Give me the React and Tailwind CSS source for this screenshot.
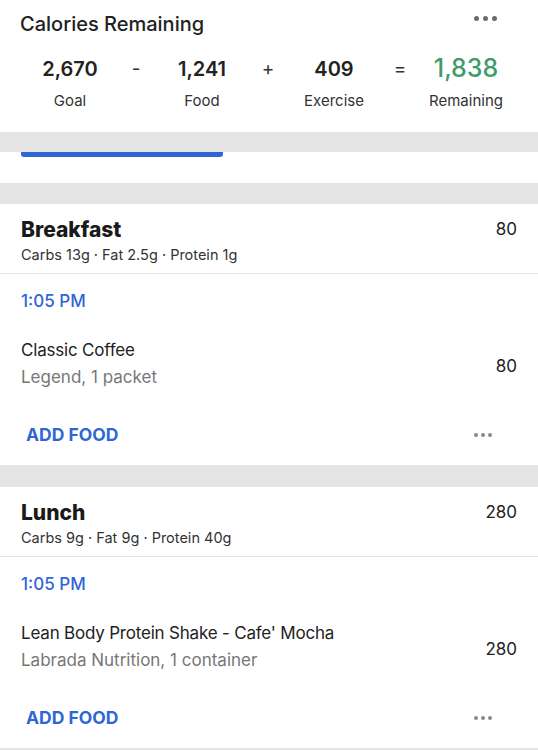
import React from 'react';

const meals = [
  {
    name: 'Breakfast',
    total: 80,
    macros: 'Carbs 13g · Fat 2.5g · Protein 1g',
    time: '1:05 PM',
    food: 'Classic Coffee',
    detail: 'Legend, 1 packet',
    cal: 80,
  },
  {
    name: 'Lunch',
    total: 280,
    macros: 'Carbs 9g · Fat 9g · Protein 40g',
    time: '1:05 PM',
    food: "Lean Body Protein Shake - Cafe' Mocha",
    detail: 'Labrada Nutrition, 1 container',
    cal: 280,
  },
];

function Dots({ size = 'w-[5px] h-[5px]', color = 'bg-[#6b6b6b]', gap = 'gap-[4px]' }) {
  return (
    <div className={`flex ${gap}`}>
      <span className={`${size} ${color} rounded-full`} />
      <span className={`${size} ${color} rounded-full`} />
      <span className={`${size} ${color} rounded-full`} />
    </div>
  );
}

function Stat({ value, label, green }) {
  return (
    <div className="flex flex-col items-center">
      <div
        className={
          green
            ? 'h-[34px] flex items-center text-[25px] font-medium text-[#3f9b6b]'
            : 'h-[34px] flex items-end pb-[2px] text-[20px] font-semibold text-[#222]'
        }
      >
        {value}
      </div>
      <div className="mt-[5px] text-[15px] text-[#333] leading-[20px]">{label}</div>
    </div>
  );
}

function Op({ children }) {
  return (
    <div className="h-[34px] flex items-end pb-[3px] justify-center text-[19px] text-[#333]">
      {children}
    </div>
  );
}

function MealCard({ meal }) {
  return (
    <div className="bg-white">
      <div className="px-[21px] pt-[14px] pb-[8px] flex justify-between">
        <div>
          <div className="h-[24px] flex items-center text-[21px] font-extrabold text-[#1a1a1a]">
            {meal.name}
          </div>
          <div className="mt-[3px] h-[20px] flex items-center text-[14.5px] text-[#333]">
            {meal.macros}
          </div>
        </div>
        <div className="h-[24px] flex items-center text-[17px] text-[#222]">{meal.total}</div>
      </div>
      <div className="h-px bg-[#e6e6e6]" />
      <div className="h-[52px] pt-[4px] px-[21px] flex items-center text-[17px] font-medium text-[#2f66d6]">
        {meal.time}
      </div>
      <div className="px-[21px] pt-[13px] pb-[11px] flex items-center justify-between">
        <div>
          <div className="h-[24px] flex items-center text-[17px] tracking-[-0.2px] text-[#222]">{meal.food}</div>
          <div className="mt-[4px] h-[22px] flex items-center text-[17px] text-[#777]">
            {meal.detail}
          </div>
        </div>
        <div className="text-[17px] text-[#222] pt-[5px]">{meal.cal}</div>
      </div>
      <div className="pl-[26px] pr-[46px] pt-[23px] pb-[18px] flex items-center justify-between">
        <div className="h-[24px] flex items-center text-[17.5px] font-bold text-[#2f66d6]">
          ADD FOOD
        </div>
        <Dots size="w-[4px] h-[4px]" color="bg-[#8a8a8a]" gap="gap-[3px]" />
      </div>
    </div>
  );
}

export default function App() {
  return (
    <div className="w-[538px] h-[750px] overflow-hidden bg-[#e4e4e4] font-['Inter',sans-serif]">
      <div className="bg-white h-[132px]">
        <div className="pl-[20px] pr-[41px] pt-[11px] flex justify-between items-start">
          <div className="text-[20px] font-medium text-[#222] leading-[26px]">Calories Remaining</div>
          <div className="pt-[5px]">
            <Dots />
          </div>
        </div>
        <div className="mt-[15px] px-[20px] grid grid-cols-[100px_32px_100px_32px_100px_32px_100px]">
          <Stat value="2,670" label="Goal" />
          <Op>-</Op>
          <Stat value="1,241" label="Food" />
          <Op>+</Op>
          <Stat value="409" label="Exercise" />
          <Op>=</Op>
          <Stat value="1,838" label="Remaining" green />
        </div>
      </div>
      <div className="h-[20px]" />
      <div className="bg-white h-[31px] px-[21px]">
        <div className="w-[202px] h-[5px] bg-[#2f66d6] rounded-b-[3px]" />
      </div>
      <div className="h-[21px]" />
      <MealCard meal={meals[0]} />
      <div className="h-[22px]" />
      <MealCard meal={meals[1]} />
    </div>
  );
}
